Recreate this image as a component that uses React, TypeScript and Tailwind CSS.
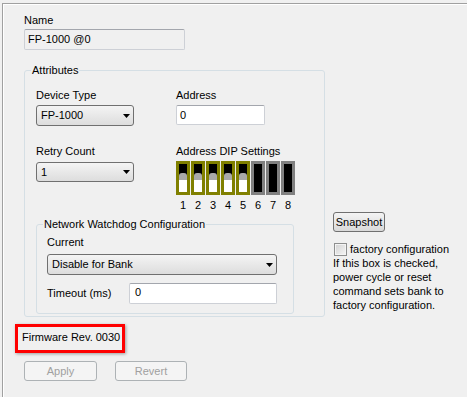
import React from 'react';

// Win7-style classic dialog: device settings page

const TextBox = ({ value, className = '' }: { value: string; className?: string }) => (
  <div className={`flex items-center rounded-[2px] border border-[#cdd0d6] border-t-[#a3a6ad] pl-[3px] ${className}`}>
    {value}
  </div>
);

const Combo = ({ value, className = '' }: { value: string; className?: string }) => (
  <div className={`flex items-center justify-between rounded-[3px] border border-[#707070] bg-linear-to-b from-[#f4f4f4] to-[#dddddd] pl-[4px] pr-[3px] ${className}`}>
    <span>{value}</span>
    <svg width="7" height="4" viewBox="0 0 7 4">
      <path d="M0 0h7L3.5 4z" fill="#000" />
    </svg>
  </div>
);

const DipSwitch = ({ on }: { on: boolean }) => (
  <div className={`flex h-[34px] w-[14px] flex-col justify-end border-[3px] bg-black ${on ? 'border-[#808000]' : 'border-[#808080]'}`}>
    {on && (
      <>
        <div className="h-[7px] w-[8px] rounded-t-[3px] bg-[#a9a9a9]" />
        <div className="h-[12px] w-[8px] bg-white" />
      </>
    )}
  </div>
);

const dips = [true, true, true, true, true, false, false, false];

const App = () => {
  return (
    <div className="h-[397px] w-[467px] overflow-hidden bg-[#f0f0f0] pl-[2px] pt-[3px] font-['Liberation_Sans',Arial,sans-serif] text-[11px] leading-[13px] text-black">
      {/* etched outer frame */}
      <div className="h-full border-l border-t border-[#a0a0a0]">
        <div className="h-full border-l border-t border-white pl-[20px] pt-[9px]">
          <div>Name</div>
          <TextBox value="FP-1000 @0" className="mt-[2px] h-[21px] w-[161px] bg-[#f0f0f0] border-[#b9bcc2] border-t-[#a3a6ad]" />

          <div className="mt-[14px] flex items-start">
            {/* Attributes group */}
            <fieldset className="w-[301px] rounded-[3px] border border-[#d5dfe5] p-0">
              <legend className="ml-[6px] px-[1px]">Attributes</legend>
              <div className="pb-[2px] pl-[11px] pt-[12px]">
                <div className="flex">
                  <div className="w-[140px]">
                    <div>Device Type</div>
                    <Combo value="FP-1000" className="mt-[3px] h-[21px] w-[98px]" />
                  </div>
                  <div>
                    <div>Address</div>
                    <TextBox value="0" className="mt-[3px] h-[20px] w-[89px] bg-white" />
                  </div>
                </div>

                <div className="mt-[19px] flex">
                  <div className="w-[140px]">
                    <div>Retry Count</div>
                    <Combo value="1" className="mt-[4px] h-[20px] w-[98px]" />
                  </div>
                  <div>
                    <div>Address DIP Settings</div>
                    <div className="mt-[3px] flex gap-[1px]">
                      {dips.map((on, i) => (
                        <DipSwitch key={i} on={on} />
                      ))}
                    </div>
                    <div className="mt-[4px] flex gap-[1px]">
                      {dips.map((_, i) => (
                        <span key={i} className="w-[14px] text-center">{i + 1}</span>
                      ))}
                    </div>
                  </div>
                </div>

                {/* Network Watchdog group */}
                <fieldset className="mt-[6px] w-[258px] rounded-[3px] border border-[#d5dfe5] p-0">
                  <legend className="ml-[6px] px-[1px]">Network Watchdog Configuration</legend>
                  <div className="pb-[9px] pl-[10px] pt-[5px]">
                    <div>Current</div>
                    <Combo value="Disable for Bank" className="mt-[5px] h-[21px] w-[230px]" />
                    <div className="mt-[8px] flex">
                      <div className="mt-[4px] w-[82px]">Timeout (ms)</div>
                      <div className="h-[21px] w-[148px] rounded-[2px] border border-[#cdd0d6] border-t-[#a3a6ad] bg-white pl-[5px] pt-[2px]">0</div>
                    </div>
                  </div>
                </fieldset>
              </div>
            </fieldset>

            {/* right column */}
            <div className="ml-[8px] mt-[148px] w-[134px]">
              <button className="h-[20px] w-[52px] rounded-[3px] border border-[#707070] bg-linear-to-b from-[#f4f4f4] to-[#d9d9d9] text-center">
                Snapshot
              </button>
              <div className="ml-[1px] mt-[11px] flex items-center">
                <span className="h-[13px] w-[13px] border border-[#8e8f8f] bg-linear-to-br from-[#d2d2d2] to-[#f6f6f6] shadow-[inset_0_0_0_1px_#f4f4f4]" />
                <span className="ml-[3px]">factory configuration</span>
              </div>
              <p className="leading-[14px]">
                If this box is checked,<br />
                power cycle or reset<br />
                command sets bank to<br />
                factory configuration.
              </p>
            </div>
          </div>

          {/* highlighted firmware revision */}
          <div className="ml-[-9px] mt-[7px] h-[29px] w-[110px] border-[3px] border-[#ff0000] pl-[4px] pt-[4px] shadow-[1px_1px_3px_rgba(0,0,0,0.35)]">
            Firmware Rev. 0030
          </div>

          <div className="mt-[8px] flex">
            <button disabled className="h-[20px] w-[73px] rounded-[3px] border border-[#adb2b5] bg-[#f4f4f4] text-center text-[#a0a0a0]">
              Apply
            </button>
            <button disabled className="ml-[18px] h-[20px] w-[72px] rounded-[3px] border border-[#adb2b5] bg-[#f4f4f4] text-center text-[#a0a0a0]">
              Revert
            </button>
          </div>
        </div>
      </div>
    </div>
  );
};

export default App;
